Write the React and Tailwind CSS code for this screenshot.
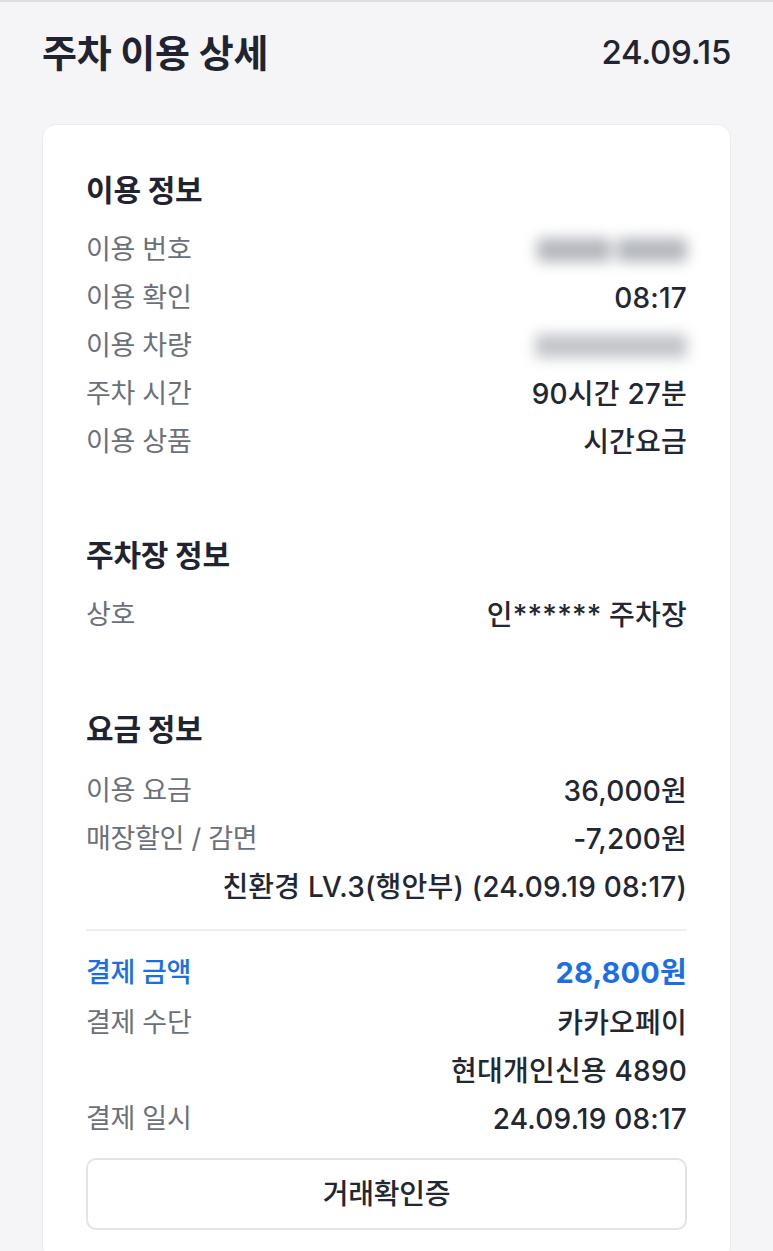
import React from "react";

const FONT = { fontFamily: 'Inter, "Noto Sans CJK KR", "Noto Sans", sans-serif' };

function SectionTitle({ children }) {
  return (
    <div className="h-[40px] flex items-center text-[30px] font-bold text-[#1f2430] tracking-[-0.2px]">
      {children}
    </div>
  );
}

function Row({ label, value, h = "h-[48px]", labelClass = "text-[#6b7079] text-[27px] tracking-[-0.3px]", valueClass = "text-[#222732] font-medium text-[28px] tracking-[0.2px]" }) {
  return (
    <div className={`${h} flex items-center justify-between`}>
      <span className={labelClass}>{label}</span>
      <span className={valueClass}>{value}</span>
    </div>
  );
}

// blurred out (masked) value
function Masked({ parts, tone = "bg-[#b4b7bd]" }) {
  return (
    <div className="flex items-center gap-[6px] blur-[7px]">
      {parts.map((w, i) => (
        <div key={i} className={`h-[24px] rounded ${tone}`} style={{ width: w }} />
      ))}
    </div>
  );
}

export default function App() {
  return (
    <div className="min-h-screen bg-[#f5f5f7] border-t-2 border-[#dcdde0] px-[42px] pb-10" style={FONT}>
      {/* Header */}
      <div className="h-[102px] flex items-center justify-between">
        <h1 className="text-[38px] font-bold text-[#1f2430] tracking-[-0.2px]">주차 이용 상세</h1>
        <span className="text-[33px] font-medium text-[#1f2430] tracking-[-0.3px]">24.09.15</span>
      </div>

      {/* Card */}
      <div className="mt-[20px] bg-white rounded-[14px] border border-[#ebecef] px-[43px] pt-[45px] pb-[30px]">
        <SectionTitle>이용 정보</SectionTitle>
        <div className="mt-[16px]">
          <Row label="이용 번호" value={<Masked parts={[74, 70]} />} />
          <Row label="이용 확인" value="08:17" />
          <Row label="이용 차량" value={<Masked parts={[152]} tone="bg-[#c3c5ca]" />} />
          <Row label="주차 시간" value="90시간 27분" />
          <Row label="이용 상품" value="시간요금" />
        </div>

        <div className="mt-[69px]">
          <SectionTitle>주차장 정보</SectionTitle>
        </div>
        <div className="mt-[16px]">
          <Row label="상호" value="인****** 주차장" />
        </div>

        <div className="mt-[70px]">
          <SectionTitle>요금 정보</SectionTitle>
        </div>
        <div className="mt-[18px]">
          <Row label="이용 요금" value="36,000원" />
          <Row label="매장할인 / 감면" value="-7,200원" />
          <Row label="" value="친환경 LV.3(행안부) (24.09.19 08:17)" />
        </div>

        <div className="mt-[18px] h-[2px] bg-[#eeeff1]" />

        <div className="mt-[16px]">
          <Row
            h="h-[52px]"
            label="결제 금액"
            value="28,800원"
            labelClass="text-[#1c6fe3] font-medium text-[27px] tracking-[-0.3px]"
            valueClass="text-[#1c6fe3] font-bold text-[29px] tracking-[0.2px]"
          />
          <Row label="결제 수단" value="카카오페이" />
          <Row label="" value="현대개인신용 4890" />
          <Row label="결제 일시" value="24.09.19 08:17" />
        </div>

        <button className="mt-[15px] w-full h-[72px] rounded-[10px] border-2 border-[#e3e4e7] bg-white text-[28px] font-medium text-[#222732] tracking-[-0.3px]">
          거래확인증
        </button>
      </div>
    </div>
  );
}
